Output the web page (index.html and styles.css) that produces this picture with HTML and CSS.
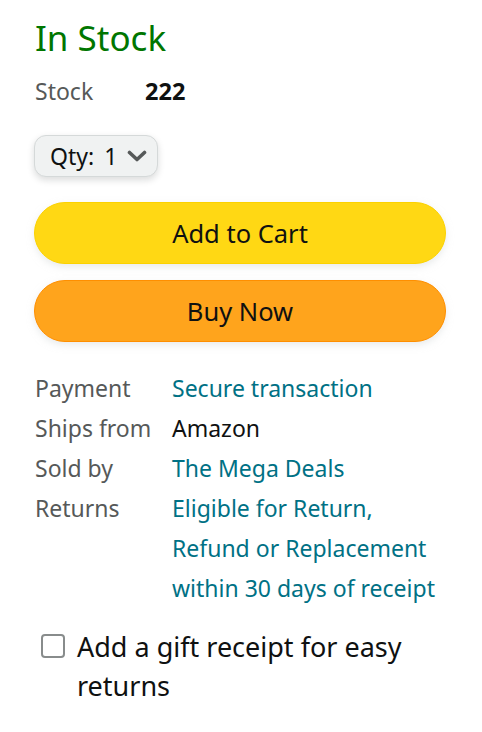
FILE: index.html
```html
<!DOCTYPE html>
<html lang="en">
<head>
<meta charset="utf-8">
<title>Buy box</title>
<link rel="stylesheet" href="styles.css">
</head>
<body>
<div class="box">
  <h1 class="title">In Stock</h1>
  <div class="stock">
    <span class="label">Stock</span>
    <span class="count">222</span>
  </div>
  <div class="qty-row">
    <button class="qty" type="button">
      <span>Qty:</span><span class="qty-num">1</span>
      <svg class="chev" width="20" height="12" viewBox="0 0 20 12" aria-hidden="true"><path d="M2.5 2.5 L10 9.5 L17.5 2.5" fill="none" stroke="#565959" stroke-width="3.6" stroke-linecap="round" stroke-linejoin="round"/></svg>
    </button>
  </div>
  <button class="btn btn-cart" type="button">Add to Cart</button>
  <button class="btn btn-buy" type="button">Buy Now</button>
  <div class="details">
    <span class="label">Payment</span><span class="link">Secure transaction</span>
    <span class="label">Ships from</span><span class="value">Amazon</span>
    <span class="label">Sold by</span><span class="link">The Mega Deals</span>
    <span class="label">Returns</span><span class="link">Eligible for Return, Refund or Replacement within 30 days of receipt</span>
  </div>
  <label class="gift">
    <span class="box-check"></span>
    <span class="gift-text">Add a gift receipt for easy returns</span>
  </label>
</div>
</body>
</html>
```
FILE: styles.css
```css
html, body {
  margin: 0;
  padding: 0;
  background: #ffffff;
}
body {
  font-family: "Noto Sans", "DejaVu Sans", sans-serif;
  color: #0F1111;
}
.box {
  width: 412px;
  padding: 14px 0 0 35px;
}
.title {
  margin: 0;
  font-size: 35px;
  line-height: 48px;
  font-weight: 400;
  color: #007600;
}
.stock {
  display: grid;
  grid-template-columns: 110px auto;
  font-size: 23px;
  line-height: 40px;
  margin-top: 9px;
}
.label {
  color: #565959;
}
.count {
  font-weight: 700;
  color: #0F1111;
  font-size: 23.5px;
}
.qty-row {
  margin-top: 24px;
}
.qty {
  display: inline-flex;
  align-items: center;
  gap: 10px;
  height: 42px;
  width: 124px;
  box-sizing: border-box;
  margin: 0 0 0 -1px;
  padding: 0 0 0 15px;
  background: #F0F2F2;
  border: 1.5px solid #D5D9D9;
  border-radius: 12px;
  box-shadow: 0 3px 7px rgba(15, 17, 17, 0.15);
  font-family: inherit;
  font-size: 23px;
  color: #0F1111;
}
.chev {
  display: block;
  margin-left: 0;
}
.btn {
  display: block;
  width: 412px;
  height: 62px;
  margin: 0 0 0 -1px;
  border-radius: 31px;
  font-family: inherit;
  font-size: 25.5px;
  color: #0F1111;
  box-shadow: 0 3px 7px rgba(213, 217, 217, 0.5);
}
.btn-cart {
  margin-top: 25px;
  background: #FFD814;
  border: 1.5px solid #FCD200;
}
.btn-buy {
  margin-top: 16px;
  background: #FFA41C;
  border: 1.5px solid #FF8F00;
}
.details {
  display: grid;
  grid-template-columns: 137px 274px;
  font-size: 23px;
  line-height: 40px;
  margin-top: 26px;
}
.link {
  color: #007185;
}
.value {
  color: #0F1111;
}
.gift {
  display: flex;
  align-items: flex-start;
  gap: 12px;
  margin-top: 19px;
  padding-left: 6px;
  font-size: 27px;
  line-height: 39px;
  width: 370px;
}
.box-check {
  flex: none;
  width: 24px;
  height: 24px;
  box-sizing: border-box;
  margin-top: 7px;
  border: 2px solid #888C8C;
  border-radius: 4px;
  background: #fff;
}
.gift-text {
  color: #0F1111;
}
```
